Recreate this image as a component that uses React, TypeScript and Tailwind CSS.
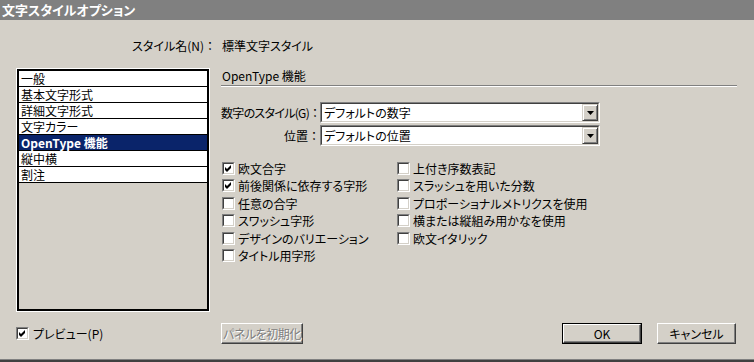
import React from "react";

const font = "font-['Noto_Sans_CJK_JP','Noto_Sans_CJK_SC',sans-serif] [font-feature-settings:'palt'] whitespace-nowrap";

function Colon() {
  return <span className="[font-feature-settings:normal] tracking-normal">：</span>;
}

function Check({ checked }: { checked?: boolean }) {
  return (
    <div className="w-[13px] h-[13px] border border-t-[#808080] border-l-[#808080] border-b-white border-r-white shrink-0">
      <div className="w-full h-full border border-t-[#404040] border-l-[#404040] border-b-[#d4d0c8] border-r-[#d4d0c8] bg-white flex items-center justify-center">
        {checked && (
          <svg width="7" height="7" viewBox="0 0 7 7">
            <path d="M0 2 L2 4 L6 0 L6 3 L2 7 L0 5 Z" fill="#000" />
          </svg>
        )}
      </div>
    </div>
  );
}

function Dropdown({ value }: { value: string }) {
  return (
    <div className="w-[280px] h-[21px] shrink-0 border border-t-[#808080] border-l-[#808080] border-b-white border-r-white">
      <div className="w-full h-full border border-t-[#404040] border-l-[#404040] border-b-[#d4d0c8] border-r-[#d4d0c8] bg-white flex">
        <div className="flex-1 pl-[2px] text-[12px] leading-[17px] text-black">{value}</div>
        <div className="w-[16px] h-[17px] bg-[#d4d0c8] border border-t-[#d4d0c8] border-l-[#d4d0c8] border-b-[#404040] border-r-[#404040] shadow-[inset_1px_1px_0_#ffffff,inset_-1px_-1px_0_#808080] flex items-center justify-center">
          <svg width="7" height="4" viewBox="0 0 7 4">
            <path d="M0 0 H7 L3.5 4 Z" fill="#000" />
          </svg>
        </div>
      </div>
    </div>
  );
}

function Button({ label, def, disabled, w }: { label: string; def?: boolean; disabled?: boolean; w: string }) {
  const inner = (
    <div className="w-full h-full border border-t-white border-l-white border-b-[#404040] border-r-[#404040] shadow-[inset_-1px_-1px_0_#808080] flex items-center justify-center text-[12px]">
      {disabled ? (
        <span className="text-[#808080] [text-shadow:1px_1px_0_#ffffff] tracking-[-0.5px]">{label}</span>
      ) : (
        <span className="text-black">{label}</span>
      )}
    </div>
  );
  return (
    <div className={`${w} h-[21px] ${def ? "border border-black" : ""}`}>{inner}</div>
  );
}

const listItems = ["一般", "基本文字形式", "詳細文字形式", "文字カラー", "OpenType 機能", "縦中横", "割注"];
const col1: [string, boolean][] = [
  ["欧文合字", true],
  ["前後関係に依存する字形", true],
  ["任意の合字", false],
  ["スワッシュ字形", false],
  ["デザインのバリエーション", false],
  ["タイトル用字形", false],
];
const col2 = ["上付き序数表記", "スラッシュを用いた分数", "プロポーショナルメトリクスを使用", "横または縦組み用かなを使用", "欧文イタリック"];
const rowH = ["h-[17px]", "h-[18px]", "h-[17px]", "h-[18px]", "h-[17px]", "h-[18px]"];

export default function App() {
  return (
    <div className={`w-[754px] h-[362px] bg-[#d4d0c8] flex flex-col overflow-hidden text-black ${font}`}>
      <div className="h-[20px] bg-[#808080] text-white font-bold text-[13px] leading-[20px] pl-[2px]">文字スタイルオプション</div>

      <div className="mt-[18px] h-[16px] flex text-[12px] leading-[16px]">
        <div className="w-[216px] text-right">スタイル名(N)<Colon /></div>
        <div className="ml-[6px]">標準文字スタイル</div>
      </div>

      <div className="mt-[14px] flex">
        <div className="ml-[16px] w-[194px] h-[244px] border border-white">
          <div className="w-full h-full border-2 border-black">
            {listItems.map((it, i) => (
              <div
                key={it}
                className={`h-[16px] border-b border-black pl-[2px] text-[12px] leading-[15px] ${
                  i === 4 ? "bg-[#0a246a] text-white font-bold" : "bg-white"
                }`}
              >
                {it}
              </div>
            ))}
          </div>
        </div>

        <div className="ml-[11px] w-[516px] flex flex-col">
          <div className="h-[15px] pl-[1px] text-[12px] leading-[15px]">OpenType 機能</div>
          <div className="mt-[2px] h-[2px] border-t border-t-[#808080] border-b border-b-white" />
          <div className="mt-[15px] flex items-center h-[21px]">
            <div className="w-[99px] shrink-0 text-right text-[12px] tracking-[-0.7px]">数字のスタイル(G)<Colon /></div>
            <Dropdown value="デフォルトの数字" />
          </div>
          <div className="mt-[2px] flex items-center h-[21px]">
            <div className="w-[99px] shrink-0 text-right text-[12px]">位置<Colon /></div>
            <Dropdown value="デフォルトの位置" />
          </div>
          <div className="mt-[16px] flex">
            <div className="w-[176px] pl-[1px] flex flex-col">
              {col1.map(([t, c], i) => (
                <div key={t} className={`${rowH[i]} flex items-start`}>
                  <Check checked={c} />
                  <span className="ml-[3px] text-[12px] leading-[13px]">{t}</span>
                </div>
              ))}
            </div>
            <div className="flex flex-col">
              {col2.map((t, i) => (
                <div key={t} className={`${rowH[i]} flex items-start`}>
                  <Check />
                  <span className="ml-[3px] text-[12px] leading-[13px]">{t}</span>
                </div>
              ))}
            </div>
          </div>
        </div>
      </div>

      <div className="mt-[11px] h-[21px] flex items-center">
        <div className="ml-[16px] w-[205px] flex items-center">
          <Check checked />
          <span className="ml-[4px] text-[12px]">プレビュー(P)</span>
        </div>
        <Button label="パネルを初期化" disabled w="w-[82px]" />
        <div className="flex-1" />
        <Button label="OK" def w="w-[80px]" />
        <div className="ml-[15px]">
          <Button label="キャンセル" w="w-[79px]" />
        </div>
        <div className="w-[18px]" />
      </div>

      <div className="flex-1" />
      <div className="h-[3px] border-t border-t-[#808080] bg-[#404040]" />
    </div>
  );
}
